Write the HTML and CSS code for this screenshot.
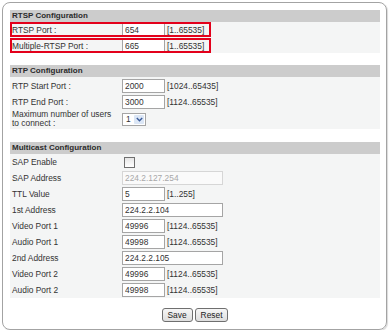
FILE: index.html
```html
<!DOCTYPE html>
<html lang="en">

<head>
    <meta charset="UTF-8">
    <meta name="viewport" content="width=device-width, initial-scale=1.0">
    <title>Streaming Settings</title>
    <link rel="stylesheet" href="styles.css">
</head>

<body>
    <div class="panel">
        <div class="section">
            <div class="sec-title">RTSP Configuration</div>
            <div class="sec-body rtsp">
                <div class="row hl">
                    <span class="label">RTSP Port :</span>
                    <input class="num" type="text" value="654">
                    <span class="range">[1..65535]</span>
                </div>
                <div class="row hl">
                    <span class="label">Multiple-RTSP Port :</span>
                    <input class="num" type="text" value="665">
                    <span class="range">[1..65535]</span>
                </div>
            </div>
        </div>

        <div class="section">
            <div class="sec-title">RTP Configuration</div>
            <div class="sec-body rtp">
                <div class="row">
                    <span class="label">RTP Start Port :</span>
                    <input class="num" type="text" value="2000">
                    <span class="range">[1024..65435]</span>
                </div>
                <div class="row">
                    <span class="label">RTP End Port :</span>
                    <input class="num" type="text" value="3000">
                    <span class="range">[1124..65535]</span>
                </div>
                <div class="row tall">
                    <span class="label">Maximum number of users<br>to connect :</span>
                    <div class="select">
                        <span class="sel-val">1</span>
                        <span class="sel-btn">
                            <svg width="7" height="5" viewBox="0 0 7 5"><path d="M0.8 1 L3.5 3.8 L6.2 1" fill="none" stroke="#3b5c9a" stroke-width="1.4"/></svg>
                        </span>
                    </div>
                </div>
            </div>
        </div>

        <div class="section">
            <div class="sec-title">Multicast Configuration</div>
            <div class="sec-body multicast">
                <div class="row">
                    <span class="label">SAP Enable</span>
                    <span class="check"></span>
                </div>
                <div class="row">
                    <span class="label">SAP Address</span>
                    <input class="wide" type="text" value="224.2.127.254" disabled>
                </div>
                <div class="row">
                    <span class="label">TTL Value</span>
                    <input class="num" type="text" value="5">
                    <span class="range">[1..255]</span>
                </div>
                <div class="row">
                    <span class="label">1st Address</span>
                    <input class="wide" type="text" value="224.2.2.104">
                </div>
                <div class="row">
                    <span class="label">Video Port 1</span>
                    <input class="num" type="text" value="49996">
                    <span class="range">[1124..65535]</span>
                </div>
                <div class="row">
                    <span class="label">Audio Port 1</span>
                    <input class="num" type="text" value="49998">
                    <span class="range">[1124..65535]</span>
                </div>
                <div class="row">
                    <span class="label">2nd Address</span>
                    <input class="wide" type="text" value="224.2.2.105">
                </div>
                <div class="row">
                    <span class="label">Video Port 2</span>
                    <input class="num" type="text" value="49996">
                    <span class="range">[1124..65535]</span>
                </div>
                <div class="row">
                    <span class="label">Audio Port 2</span>
                    <input class="num" type="text" value="49998">
                    <span class="range">[1124..65535]</span>
                </div>
            </div>
        </div>

        <div class="buttons">
            <button type="button">Save</button>
            <button type="button">Reset</button>
        </div>
    </div>
</body>

</html>
```

FILE: styles.css
```css
body {
    margin: 0;
    background-color: #fff;
    font-family: 'Liberation Sans', Arial, sans-serif;
    font-size: 8.4px;
    color: #333;
}

.panel {
    margin: 2px 3px 0 2px;
    height: 319px;
    padding: 7px 6px 0 7px;
    border: 1px solid #a3a3a3;
    border-radius: 8px;
    box-shadow: 1px 1px 1px rgba(0, 0, 0, 0.15);
}

.section {
    margin-bottom: 12px;
}

.section:nth-child(2) {
    margin-bottom: 13px;
}

.sec-title {
    height: 12px;
    line-height: 12px;
    padding-left: 2px;
    background-color: #cccccc;
    font-weight: bold;
    font-size: 8px;
    color: #2b2b2b;
}

.sec-body {
    background-color: #f4f5f5;
}

.row {
    display: flex;
    align-items: center;
    height: 16px;
}

.label {
    width: 110px;
    padding-left: 2px;
    flex-shrink: 0;
}

.rtsp .row {
    width: 201px;
    height: 15px;
    margin-bottom: 1px;
    outline: 2px solid #e3001b;
    outline-offset: -2px;
}

.rtsp input {
    height: 15px;
}

.rtp {
    padding: 1px 0;
}

.row.tall {
    height: 18px;
    line-height: 9px;
}

input {
    margin: 0;
    padding: 0 2px;
    height: 14px;
    box-sizing: border-box;
    border: 1px solid #a5a5a5;
    background-color: #fff;
    font: inherit;
    color: #333;
    outline: none;
}

.num {
    width: 43px;
}

.wide {
    width: 101px;
}

input:disabled {
    border-color: #d6d6d6;
    color: #a8a8a8;
    background-color: #fafafa;
}

.range {
    margin-left: 2px;
}

.select {
    display: flex;
    align-items: center;
    justify-content: space-between;
    width: 24px;
    height: 13px;
    box-sizing: border-box;
    border: 1px solid #a5a5a5;
    background-color: #fff;
}

.sel-val {
    padding-left: 3px;
}

.sel-btn {
    display: flex;
    align-items: center;
    justify-content: center;
    width: 10px;
    height: 9px;
    margin-right: 1px;
    background-color: #dce7f6;
    border-radius: 1px;
}

.check {
    width: 9px;
    height: 9px;
    margin-left: 2px;
    border: 1px solid #6f6f6f;
    background: linear-gradient(#e6e6e6, #ffffff);
}

.buttons {
    display: flex;
    justify-content: center;
    gap: 2px;
    margin-top: -2px;
}

button {
    height: 14px;
    padding: 0 5px;
    border: 1px solid #6f6f6f;
    border-radius: 3px;
    background: linear-gradient(#f6f6f6, #dedede);
    font: inherit;
    color: #222;
    cursor: pointer;
}
```
